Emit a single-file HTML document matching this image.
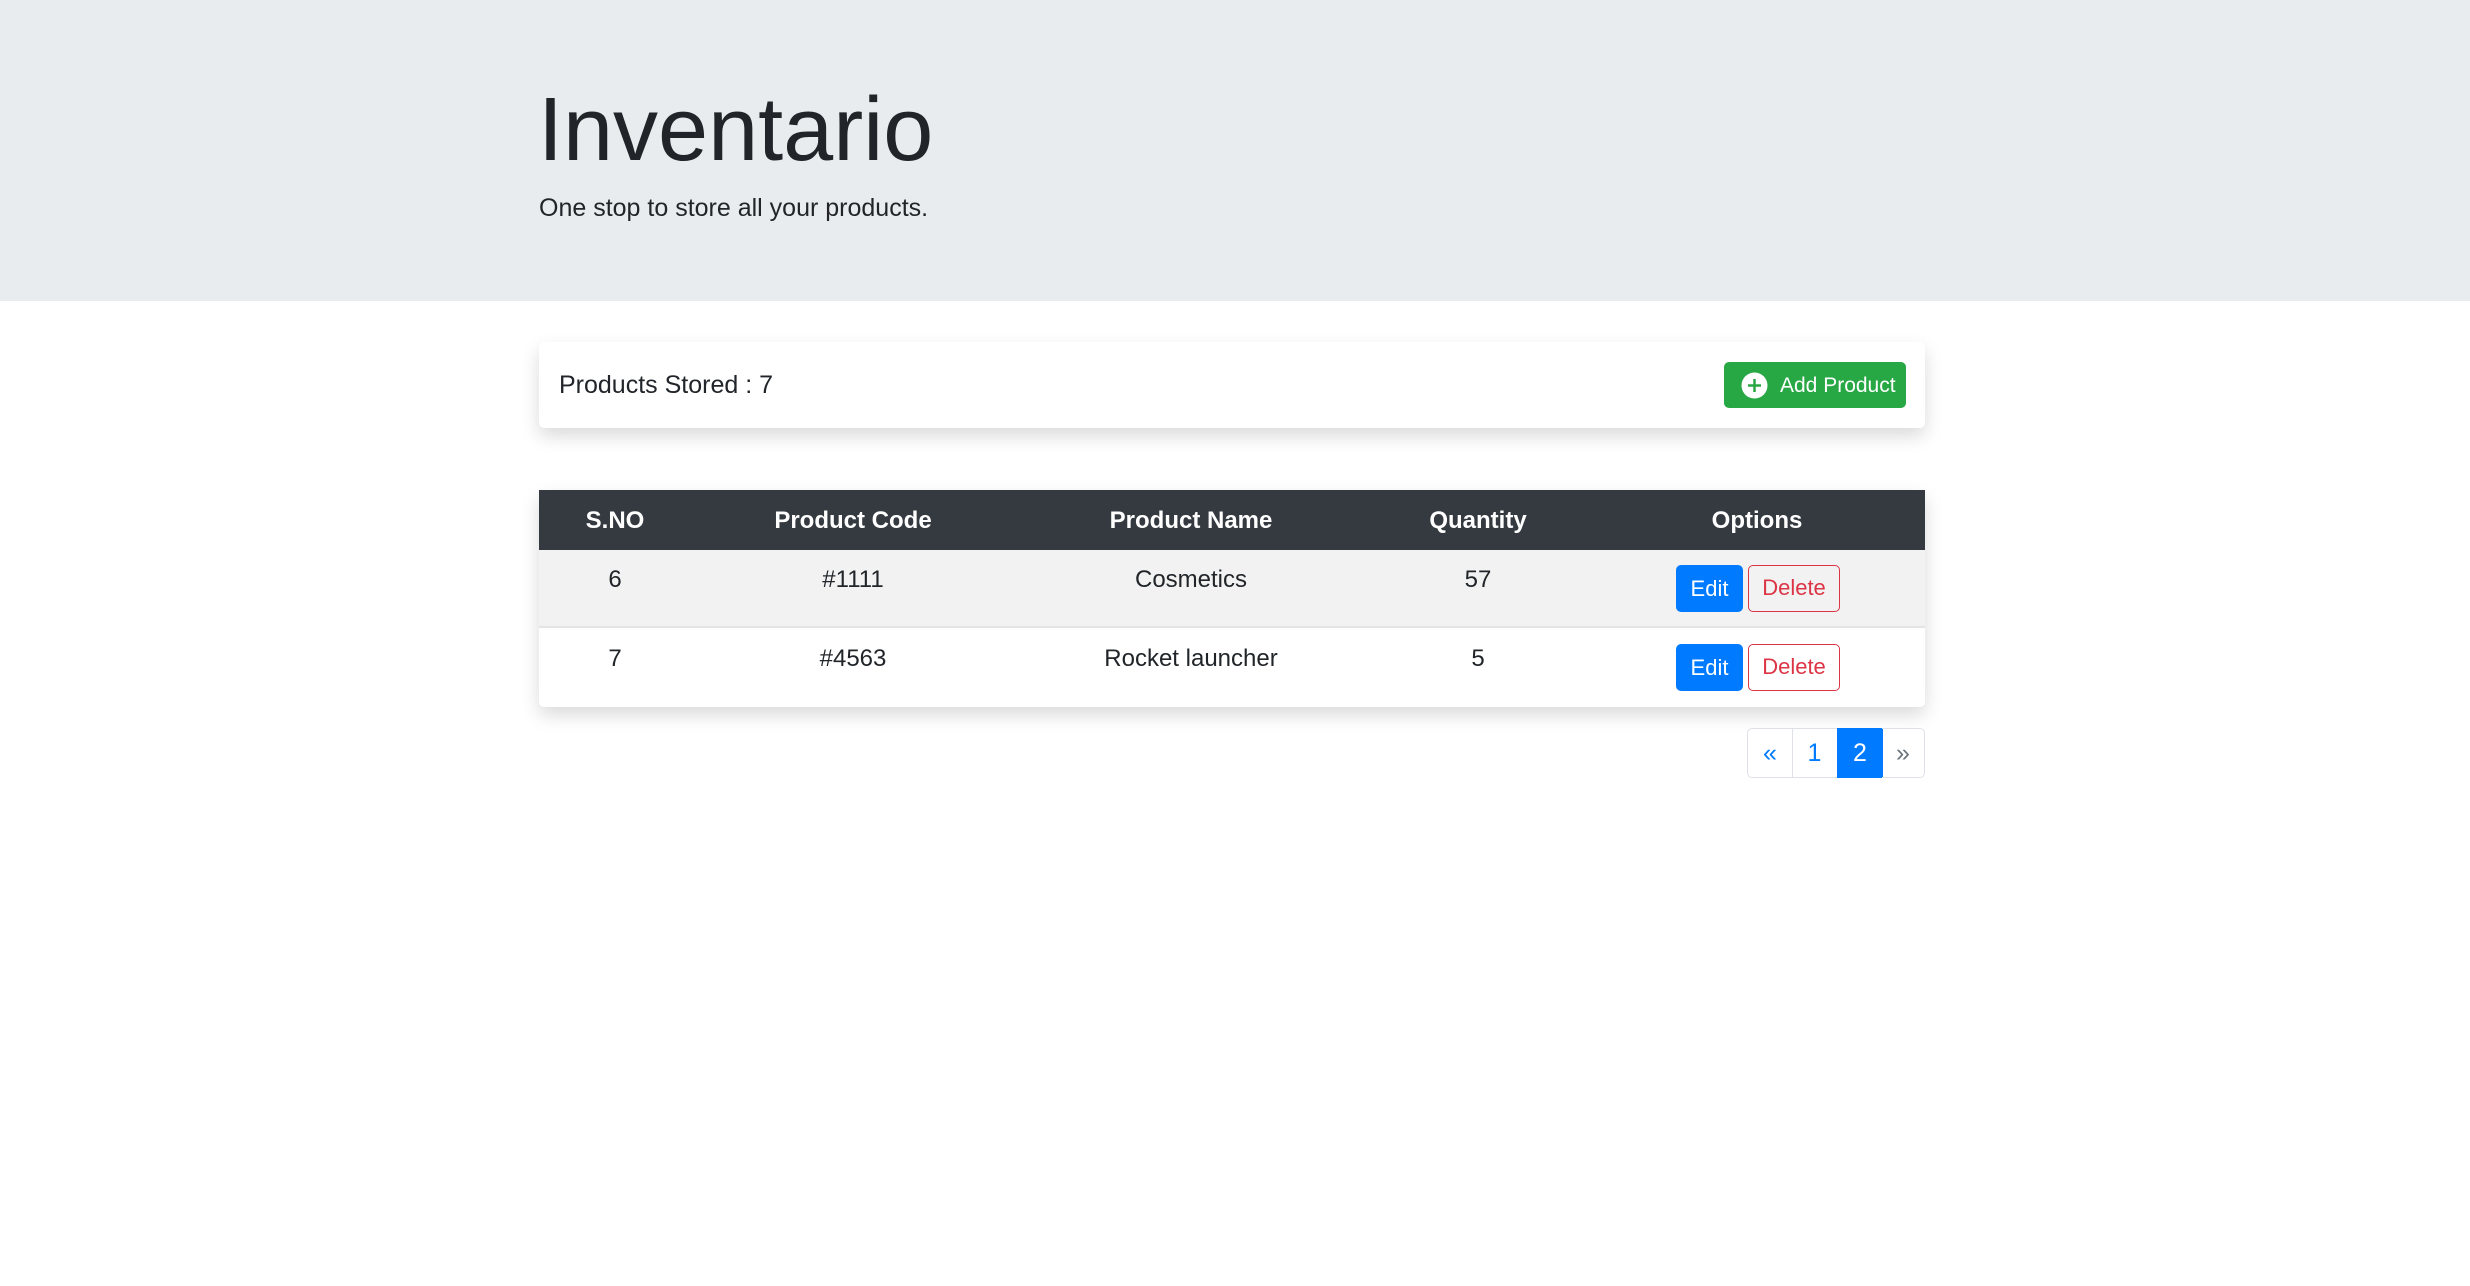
<!DOCTYPE html>
<html><head><meta charset="utf-8"><style>
*{box-sizing:border-box;margin:0;padding:0}
body{width:2470px;height:1286px;background:#fff;font-family:"Liberation Sans",Arial,sans-serif;color:#212529;position:relative;overflow:hidden}
.jumbo{position:absolute;left:0;top:0;width:2470px;height:301px;background:#e9ecef}
.t{position:absolute;line-height:1;white-space:nowrap}
.card{position:absolute;left:539px;top:342px;width:1386px;height:86px;background:#fff;border-radius:5px;box-shadow:0 8px 18px rgba(0,0,0,.15)}
.addbtn{position:absolute;left:1724px;top:362px;width:182px;height:46px;background:#28a745;border-radius:5px;color:#fff;font-size:21px}
.tbl{position:absolute;left:539px;top:490px;width:1386px;height:217px;box-shadow:0 8px 18px rgba(0,0,0,.15);border-radius:0 0 5px 5px;background:#fff}
.hd{position:absolute;left:0;top:0;width:1386px;height:60px;background:#343a40}
.r1{position:absolute;left:0;top:60px;width:1386px;height:78px;background:#f2f2f2;border-bottom:2px solid #e4e4e4}
.c{position:absolute;transform:translateX(-50%);line-height:1;white-space:nowrap}
.hd .c{color:#fff;font-weight:bold;font-size:24px;top:19px}
.cell{font-size:24px;top:18px}
.edit{position:absolute;left:1137px;width:67px;height:47px;background:#007bff;border-radius:5px;color:#fff;font-size:22px;text-align:center;line-height:47px}
.del{position:absolute;left:1209px;width:92px;height:47px;border:1.5px solid #dc3545;border-radius:5px;color:#dc3545;font-size:22px;text-align:center;line-height:44px}
.pg{position:absolute;top:728px;height:50px;border:1.5px solid #dee2e6;font-size:25px;line-height:48px;text-align:center;color:#007bff}
</style></head><body>
<div class="jumbo"></div>
<div class="t" style="left:538px;top:85px;font-size:90px;color:#212529">Inventario</div>
<div class="t" style="left:539px;top:196px;font-size:25px">One stop to store all your products.</div>
<div class="card"></div>
<div class="t" style="left:559px;top:373px;font-size:25px">Products Stored : 7</div>
<div class="addbtn">
<svg style="position:absolute;left:17px;top:10px" width="27" height="27" viewBox="0 0 27 27"><circle cx="13.5" cy="13.5" r="13" fill="#fff"/><path d="M13.5 7v13M7 13.5h13" stroke="#28a745" stroke-width="2.5"/></svg>
<span class="t" style="left:56px;top:13px">Add Product</span></div>
<div class="tbl">
<div class="hd">
<div class="c" style="left:76px">S.NO</div>
<div class="c" style="left:314px">Product Code</div>
<div class="c" style="left:652px">Product Name</div>
<div class="c" style="left:939px">Quantity</div>
<div class="c" style="left:1218px">Options</div>
</div>
<div class="r1"></div>
<div style="position:absolute;left:0;top:60px;width:1386px;height:79px">
<div class="c cell" style="left:76px">6</div>
<div class="c cell" style="left:314px">#1111</div>
<div class="c cell" style="left:652px">Cosmetics</div>
<div class="c cell" style="left:939px">57</div>
<div class="edit" style="top:15px">Edit</div><div class="del" style="top:15px">Delete</div>
</div>
<div style="position:absolute;left:0;top:139px;width:1386px;height:79px">
<div class="c cell" style="left:76px">7</div>
<div class="c cell" style="left:314px">#4563</div>
<div class="c cell" style="left:652px">Rocket launcher</div>
<div class="c cell" style="left:939px">5</div>
<div class="edit" style="top:15px">Edit</div><div class="del" style="top:15px">Delete</div>
</div>
</div>
<div class="pg" style="left:1747px;width:46px;border-radius:5px 0 0 5px">«</div>
<div class="pg" style="left:1792px;width:46px;border-left:none">1</div>
<div class="pg" style="left:1837px;width:46px;background:#007bff;border-color:#007bff;color:#fff">2</div>
<div class="pg" style="left:1882px;width:43px;border-left:none;border-radius:0 5px 5px 0;color:#6c757d">»</div>
</body></html>
